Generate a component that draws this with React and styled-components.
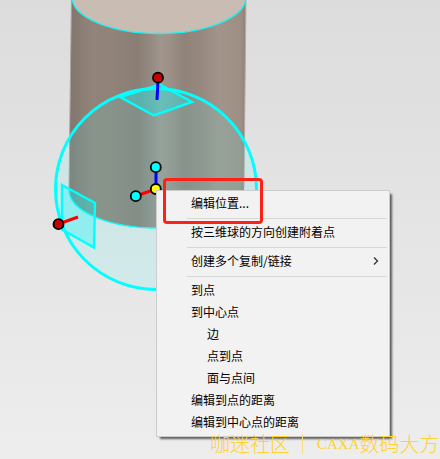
import React from 'react';
import styled, { createGlobalStyle } from 'styled-components';

const GlobalStyle = createGlobalStyle`
  * {
    box-sizing: border-box;
  }

  body {
    margin: 0;
    font-family: 'Noto Sans CJK SC', sans-serif;
  }
`;

const Viewport = styled.main`
  position: relative;
  min-height: 100vh;
  overflow: hidden;
  background: linear-gradient(#dcdcdc, #ededed);
`;

const Model = styled.svg`
  display: block;
  width: 100%;
  height: auto;
`;

const ContextMenu = styled.ul`
  position: absolute;
  top: 190px;
  left: 156px;
  width: 234px;
  margin: 0;
  padding: 2px;
  list-style: none;
  background-color: #f2f2f2;
  border: 1px solid #cccccc;
  box-shadow: 3px 3px 2px -1px rgba(0, 0, 0, 0.6);
`;

const MenuButton = styled.button`
  display: flex;
  align-items: center;
  justify-content: space-between;
  width: 100%;
  height: 22px;
  padding: 0 8px 2px ${({ $indent }) => ($indent ? '48px' : '32px')};
  border: none;
  background: none;
  color: #000000;
  font-family: inherit;
  font-size: 12px;
  line-height: 20px;
  text-align: left;
  white-space: nowrap;
  cursor: default;

  &:hover {
    background-color: #91c9f7;
  }
`;

const Separator = styled.li`
  height: 1px;
  margin: 3px 0 3px 28px;
  background-color: #d7d7d7;
`;

const Highlight = styled.div`
  position: absolute;
  top: 178px;
  left: 163px;
  width: 100px;
  height: 46px;
  border: 3px solid #ff2116;
  border-radius: 4px;
  pointer-events: none;
`;

const Watermark = styled.p`
  position: absolute;
  top: 432px;
  left: 210px;
  display: flex;
  align-items: center;
  margin: 0;
  color: #ffd22e;
  font-size: 20px;
  font-weight: 300;
  line-height: 24px;
  white-space: nowrap;
  pointer-events: none;
`;

const Divider = styled.span`
  width: 1px;
  height: 20px;
  margin: 0 14px 0 12px;
  background-color: #f5dc7c;
`;

const Latin = styled.span`
  font-family: 'Liberation Serif', serif;
  font-size: 15px;
`;

const items = [
  { label: '编辑位置...' },
  { separator: true },
  { label: '按三维球的方向创建附着点' },
  { separator: true },
  { label: '创建多个复制/链接', submenu: true },
  { separator: true },
  { label: '到点' },
  { label: '到中心点' },
  { label: '边', indent: true },
  { label: '点到点', indent: true },
  { label: '面与点间', indent: true },
  { label: '编辑到点的距离' },
  { label: '编辑到中心点的距离' },
];

const Chevron = () => (
  <svg width="6" height="8" viewBox="0 0 6 8" fill="none" stroke="#333333" strokeWidth="1.3" aria-hidden="true">
    <path d="M1 .5 4.5 4 1 7.5" />
  </svg>
);

const Cylinder = () => (
  <>
    <path d="M71.5 -5H246L244 190A87.5 38 0 0 1 69 190Z" fill="url(#metal)" />
    <path d="M71.5 -5 69 188" stroke="#a9a39e" />
    <path d="M246 -5 244 188" stroke="#b5aca6" />
    <ellipse cx="159" cy="-3" rx="87" ry="36.5" fill="#c9bcb3" stroke="#19f5f5" strokeWidth="1.4" />
    <path d="M69 190A87.5 38 0 0 0 244 190" fill="none" stroke="#00ffff" strokeWidth="1.4" />
  </>
);

const TriBall = () => (
  <g stroke="#00ffff" strokeWidth="3">
    <circle cx="156" cy="189" r="100.5" fill="#50ffff" fillOpacity=".13" />
    <path d="M120 97 160 84.5 192 102 154 115.5Z" fill="#00ffff" fillOpacity=".3" strokeWidth="2.4" />
    <path d="M62 185 95 203 94 247.5 62 229.5Z" fill="#00ffff" fillOpacity=".3" strokeWidth="2.4" />
    <path d="M158 80 157 100M156 167V189" stroke="#0000ff" />
    <path d="M58.5 224 78 217M136 196 156 189" stroke="#ff0000" />
    <g stroke="#000000" strokeWidth="1.8">
      <circle cx="158" cy="77.7" r="5" fill="#c80000" />
      <circle cx="58.5" cy="224.2" r="5" fill="#c80000" />
      <circle cx="155.8" cy="167.2" r="5" fill="#00ffff" />
      <circle cx="135.8" cy="196.2" r="5" fill="#00ffff" />
      <circle cx="155.8" cy="189" r="5" fill="#ffff00" />
    </g>
  </g>
);

const App = () => (
  <>
    <GlobalStyle />
    <Viewport>
      <Model viewBox="0 0 440 459" aria-hidden="true">
        <defs>
          <linearGradient id="metal">
            <stop offset="0" stopColor="#81756d" />
            <stop offset=".12" stopColor="#918379" />
            <stop offset=".24" stopColor="#918379" />
            <stop offset=".39" stopColor="#8a7e75" />
            <stop offset=".46" stopColor="#958a82" />
            <stop offset=".52" stopColor="#a1968d" />
            <stop offset=".57" stopColor="#9c9087" />
            <stop offset=".65" stopColor="#90837a" />
            <stop offset=".75" stopColor="#978980" />
            <stop offset=".85" stopColor="#a2948a" />
            <stop offset=".97" stopColor="#9e8f85" />
            <stop offset="1" stopColor="#8d8179" />
          </linearGradient>
        </defs>
        <Cylinder />
        <TriBall />
      </Model>

      <ContextMenu>
        {items.map((item, index) =>
          item.separator ? (
            <Separator key={index} role="separator" />
          ) : (
            <li key={index}>
              <MenuButton type="button" $indent={item.indent}>
                {item.label}
                {item.submenu && <Chevron />}
              </MenuButton>
            </li>
          )
        )}
      </ContextMenu>

      <Highlight />

      <Watermark>
        咖迷社区
        <Divider />
        <Latin>CAXA</Latin>
        数码大方
      </Watermark>
    </Viewport>
  </>
);

export default App;
